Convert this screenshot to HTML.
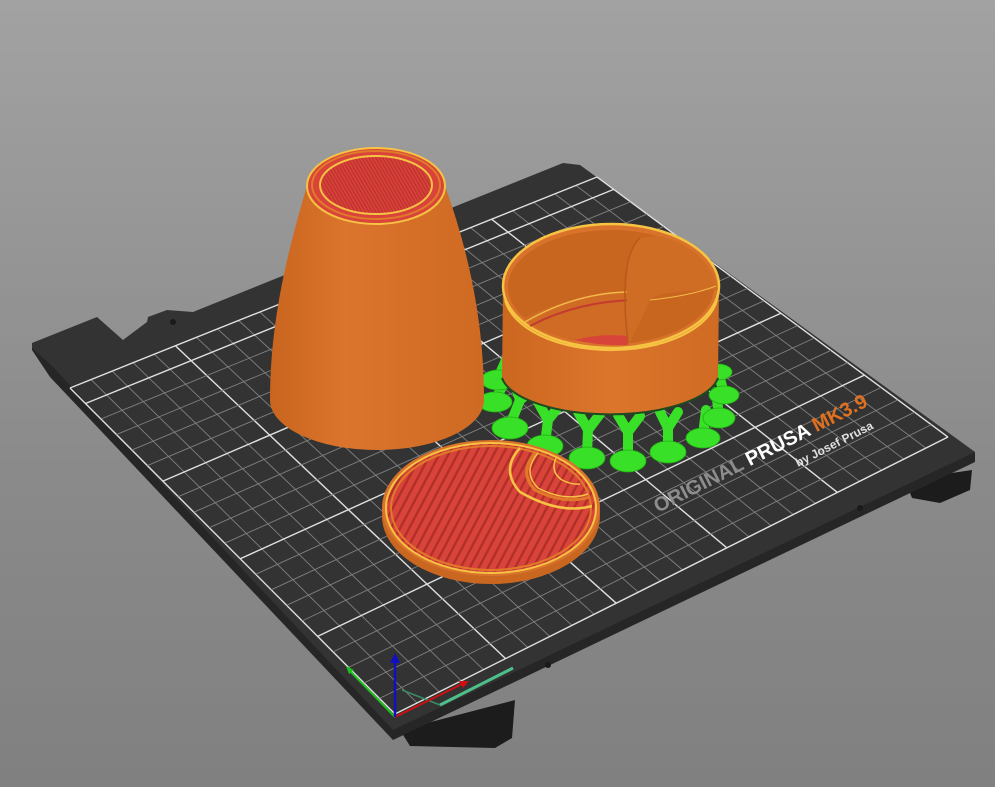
<!DOCTYPE html>
<html><head><meta charset="utf-8"><style>
html,body{margin:0;padding:0;width:995px;height:787px;overflow:hidden;background:linear-gradient(#a2a2a2,#8a8a8a 60%,#808080);}
svg{display:block}
</style></head><body>
<svg id="s" width="995" height="787" viewBox="0 0 995 787" xmlns="http://www.w3.org/2000/svg">
<defs>
<pattern id="stripe" width="8" height="8" patternUnits="userSpaceOnUse" patternTransform="rotate(28)">
<rect width="8" height="8" fill="#d9443a"/><rect width="2.5" height="8" fill="#b32f2a"/>
</pattern>
<pattern id="mesh" width="3" height="3" patternUnits="userSpaceOnUse" patternTransform="rotate(-30)">
<rect width="3" height="3" fill="#d8403a"/><rect width="1" height="3" fill="#b8302c"/>
</pattern>
<linearGradient id="cone" x1="0" x2="1">
<stop offset="0" stop-color="#c9651f"/><stop offset="0.35" stop-color="#db742c"/><stop offset="1" stop-color="#cf6a22"/>
</linearGradient>
<linearGradient id="cyl" x1="0" x2="1">
<stop offset="0" stop-color="#cc6720"/><stop offset="0.5" stop-color="#dc752c"/><stop offset="1" stop-color="#d06b23"/>
</linearGradient>
</defs>
<polygon points="400,730 410,746 495,748 512,738 515,700" fill="#1c1c1c"/>
<polygon points="905,480 912,498 940,503 970,490 972,470" fill="#1c1c1c"/>
<polygon points="32,343 32,350 50,377 393,740 975,462 975,452" fill="#262626"/>
<polygon points="32,343 97,317 123,340 147,322 148,317 167,310 193,312 563,163 580,165 975,452 393,730 53,367 32,348" fill="#333333"/>
<circle cx="173" cy="322" r="3" fill="#1a1a1a"/>
<circle cx="548" cy="665" r="3" fill="#1a1a1a"/>
<circle cx="860" cy="508" r="3" fill="#1a1a1a"/>
<g id="grid"></g>
<g transform="translate(658,513) rotate(-27)">
<text x="0" y="0" font-family="Liberation Sans, sans-serif" font-weight="bold" font-size="20" fill="#8d8d8d">ORIGINAL <tspan fill="#ffffff">PRUSA</tspan> <tspan fill="#e0701e">MK3.9</tspan></text>
</g>
<g transform="translate(798,467) rotate(-27)">
<text x="0" y="0" font-family="Liberation Sans, sans-serif" font-weight="bold" font-size="12" fill="#e0e0e0">by Josef Prusa</text>
</g>
<line x1="402" y1="690" x2="440" y2="705" stroke="#3c8a66" stroke-width="1.5"/>
<line x1="440" y1="705" x2="513" y2="668" stroke="#4fbf8a" stroke-width="3"/>
<line x1="395" y1="717" x2="349" y2="670" stroke="#1ec01e" stroke-width="2"/>
<polygon points="346,666 354,670 349,674" fill="#1ec01e"/>
<line x1="395" y1="717" x2="462" y2="684" stroke="#d01010" stroke-width="2"/>
<polygon points="469,681 459,681 463,688" fill="#d01010"/>
<line x1="395" y1="717" x2="395" y2="660" stroke="#1010c0" stroke-width="2.5"/>
<polygon points="395,653 390,663 400,663" fill="#1010c0"/>

<g stroke="#38e028" stroke-width="10" fill="none" stroke-linecap="round">
<path d="M498,378 L506,360"/><path d="M495,400 L510,372"/>
<path d="M510,425 L520,400 L515,385 M520,400 L532,390"/>
<path d="M545,444 L548,420 L538,402 M548,420 L560,405"/>
<path d="M587,455 L588,430 L578,412 M588,430 L600,414"/>
<path d="M628,458 L628,432 L618,415 M628,432 L640,416"/>
<path d="M668,450 L668,428 L660,412 M668,428 L678,412"/>
<path d="M703,435 L706,410"/><path d="M719,415 L716,392"/><path d="M724,393 L718,372"/>
</g>
<g fill="#38e028" stroke="#20b010" stroke-width="0.8">
<ellipse cx="498" cy="380" rx="17" ry="10"/>
<ellipse cx="495" cy="402" rx="17" ry="10"/>
<ellipse cx="510" cy="428" rx="18" ry="11"/>
<ellipse cx="545" cy="446" rx="18" ry="11"/>
<ellipse cx="587" cy="458" rx="18" ry="11"/>
<ellipse cx="628" cy="461" rx="18" ry="11"/>
<ellipse cx="668" cy="452" rx="18" ry="11"/>
<ellipse cx="703" cy="438" rx="17" ry="10"/>
<ellipse cx="719" cy="418" rx="16" ry="10"/>
<ellipse cx="724" cy="395" rx="15" ry="9"/>
<ellipse cx="718" cy="372" rx="14" ry="8"/>
</g>
<path d="M503,287 L502,378 A109,42 0 0 0 718,378 L719,287 Z" fill="url(#cyl)"/>
<path d="M502,378 A109,42 0 0 0 718,378" fill="none" stroke="#1f4a1f" stroke-width="2"/>
<ellipse cx="611" cy="286" rx="108" ry="62" fill="#d9722a" stroke="#f6c343" stroke-width="2.5"/>
<ellipse cx="611" cy="287" rx="103" ry="57" fill="#c8651f"/>
<path d="M523,318 Q580,290 640,293 L630,343 Q580,345 540,330 Z" fill="#cf6b24"/>
<path d="M525,322 Q580,290 640,292" fill="none" stroke="#f1b94a" stroke-width="1.5"/>
<path d="M530,326 Q580,300 640,300" fill="none" stroke="#c33a30" stroke-width="2"/>
<path d="M575,340 Q600,333 628,336 L628,345 Q600,346 575,340Z" fill="#d9443a"/>
<path d="M640,238 Q620,250 630,343 L650,300 Q660,290 718,290 Q710,250 660,236 Z" fill="#d06d25"/>
<path d="M640,238 Q618,258 628,343" fill="none" stroke="#b85a1a" stroke-width="1.5"/>
<path d="M650,300 Q690,296 716,286" fill="none" stroke="#f1b94a" stroke-width="1"/>
<path d="M505,300 A107,58 0 0 0 717,300" fill="none" stroke="#f6c343" stroke-width="2"/>
<path d="M307,186 C288,250 270,320 270,400 A107,50 0 0 0 484,400 C484,320 468,250 445,186 Z" fill="url(#cone)"/>
<ellipse cx="376" cy="186" rx="69" ry="38" fill="#d9443a" stroke="#f6c343" stroke-width="2"/>
<ellipse cx="376" cy="185" rx="64" ry="34" fill="none" stroke="#e07a2a" stroke-width="2"/>
<ellipse cx="376" cy="185" rx="56" ry="29" fill="url(#mesh)" stroke="#f6c343" stroke-width="2"/>
<ellipse cx="491" cy="516" rx="109" ry="68" fill="#c9661f"/>
<ellipse cx="491" cy="508" rx="109" ry="68" fill="#d9722a"/>
<ellipse cx="491" cy="508" rx="105" ry="65" fill="url(#stripe)" stroke="#f6c343" stroke-width="2"/>
<ellipse cx="491" cy="508" rx="100" ry="62" fill="none" stroke="#e07a2a" stroke-width="2"/>
<path d="M520,448 Q500,470 520,492 Q560,515 592,506" fill="none" stroke="#f6c343" stroke-width="2.5"/>
<path d="M536,452 Q518,472 535,490 Q565,505 590,497" fill="none" stroke="#e07a2a" stroke-width="3"/>
<path d="M538,453 Q522,472 538,488 Q565,502 588,494" fill="none" stroke="#f6c343" stroke-width="1.5"/>
<path d="M556,458 Q550,472 562,480 Q572,485 580,484" fill="none" stroke="#f6c343" stroke-width="1.5"/>
</svg>
<script>
(function(){
var L=[70,388],T=[597,177],R=[948,437],B=[395,714];
function lerp(a,b,t){return [a[0]+(b[0]-a[0])*t,a[1]+(b[1]-a[1])*t];}
var g=document.getElementById('grid'),h='';
function ln(p,q,c,w){h+='<line x1="'+p[0].toFixed(1)+'" y1="'+p[1].toFixed(1)+'" x2="'+q[0].toFixed(1)+'" y2="'+q[1].toFixed(1)+'" stroke="'+c+'" stroke-width="'+w+'"/>';}
for(var i=0;i<=25;i++){var t=i/25;var maj=(i%5==0);ln(lerp(B,R,t),lerp(L,T,t),maj?'#e0e0e0':'#808080',maj?1.4:0.9);}
for(var j=0;j<=21;j++){var t=j/21;var maj=(j%5==0)||j==21;ln(lerp(B,L,t),lerp(R,T,t),maj?'#e0e0e0':'#808080',maj?1.4:0.9);}
g.innerHTML=h;
})();
</script>
</body></html>
